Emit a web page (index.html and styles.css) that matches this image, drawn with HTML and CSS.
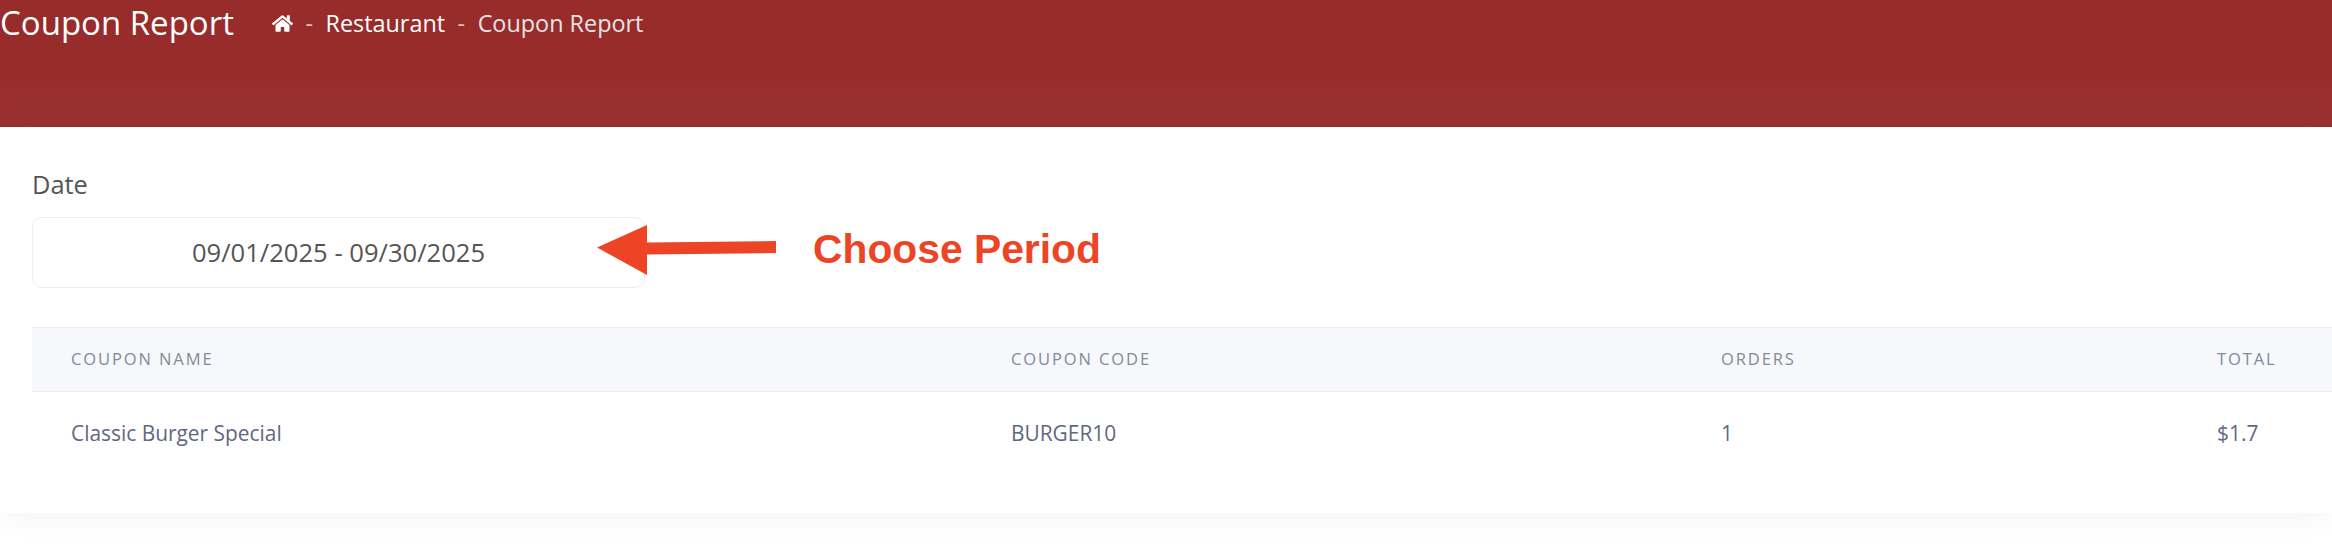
FILE: index.html
```html
<!DOCTYPE html>
<html lang="en">
<head>
<meta charset="utf-8">
<title>Coupon Report</title>
<link rel="stylesheet" href="styles.css">
</head>
<body>
<header class="banner">
  <h1 class="title">Coupon Report</h1>
  <nav class="crumbs">
    <svg class="home" viewBox="0 0 576 512" aria-hidden="true"><path d="M280.37 148.26L96 300.11V464a16 16 0 0 0 16 16l112.06-.29a16 16 0 0 0 15.92-16V368a16 16 0 0 1 16-16h64a16 16 0 0 1 16 16v95.64a16 16 0 0 0 16 16.05L464 480a16 16 0 0 0 16-16V300L295.67 148.26a12.19 12.19 0 0 0-15.3 0zM571.6 251.47L488 182.56V44.05a12 12 0 0 0-12-12h-56a12 12 0 0 0-12 12v72.61L318.47 43a48 48 0 0 0-61 0L4.34 251.47a12 12 0 0 0-1.6 16.9l25.5 31A12 12 0 0 0 45.15 301l235.22-193.74a12.19 12.19 0 0 1 15.3 0L530.9 301a12 12 0 0 0 16.9-1.6l25.5-31a12 12 0 0 0-1.7-16.93z"/></svg>
    <span class="sep">-</span>
    <span class="crumb">Restaurant</span>
    <span class="sep">-</span>
    <span class="crumb current">Coupon Report</span>
  </nav>
</header>
<main class="card">
  <label class="field-label">Date</label>
  <div class="date-box">09/01/2025 - 09/30/2025</div>
  <table class="report">
    <colgroup>
      <col class="col-name"><col class="col-code"><col class="col-orders"><col class="col-total">
    </colgroup>
    <thead>
      <tr><th>Coupon Name</th><th>Coupon Code</th><th>Orders</th><th>Total</th></tr>
    </thead>
    <tbody>
      <tr><td>Classic Burger Special</td><td>BURGER10</td><td>1</td><td>$1.7</td></tr>
    </tbody>
  </table>
  <svg class="arrow" viewBox="0 0 180 50" aria-hidden="true"><path d="M0 22.500L50 0V17.500L179 16V28L50 29.500V50Z"/></svg>
  <div class="callout">Choose Period</div>
</main>
</body>
</html>
```
FILE: styles.css
```css
* { box-sizing: border-box; }
html, body { margin: 0; height: 100%; }
body {
  background: #fff;
  font-family: "Open Sans", sans-serif;
  overflow: hidden;
}
.banner {
  height: 127px;
  background: linear-gradient(#972c2b 60%, #9a3231);
  padding: 0;
  display: flex;
  align-items: flex-start;
  color: #fff;
}
.title {
  margin: 0;
  font-size: 33px;
  line-height: 46px;
  font-weight: 500;
}
.crumbs {
  margin-left: 38px;
  display: flex;
  align-items: center;
  gap: 12.500px;
  height: 46px;
  font-size: 23.400px;
  font-weight: 500;
}
.home { width: 21px; height: 19px; fill: #fff; }
.sep { color: #d8c3c8; font-weight: 400; }
.crumb.current { color: #e8e3e6; }
.card {
  position: relative;
  height: 386px;
  background: #fff;
  padding: 40px 0 0 32px;
  box-shadow: 0 0 30px rgba(82, 63, 105, .07);
}
.field-label {
  display: block;
  font-size: 25.400px;
  line-height: 34px;
  color: #555;
  font-weight: 400;
}
.date-box {
  width: 613px;
  height: 71px;
  margin-top: 16px;
  border: 1px solid #ebedf0;
  border-radius: 10px;
  text-align: center;
  font-size: 25.600px;
  line-height: 69px;
  color: #555;
  font-weight: 400;
}
.report {
  margin-top: 39px;
  width: 2300px;
  table-layout: fixed;
  border-collapse: collapse;
}
.col-name { width: 940px; }
.col-code { width: 710px; }
.col-orders { width: 496px; }
.col-total { width: 154px; }
.report th {
  height: 64px;
  padding: 0 0 2px 39px;
  background: #f7f8fc;
  border-top: 1px solid #ebedf2;
  border-bottom: 1px solid #ebedf2;
  text-align: left;
  font-size: 16.500px;
  font-weight: 500;
  letter-spacing: 1.9px;
  text-transform: uppercase;
  color: #7f8b9b;
}
.report td {
  height: 81px;
  padding: 1px 0 0 39px;
  font-size: 20.900px;
  font-weight: 400;
  color: #5f6883;
}
.arrow {
  position: absolute;
  left: 597px;
  top: 98px;
  width: 180px;
  height: 50px;
  fill: #ee4426;
}
.callout {
  position: absolute;
  left: 813px;
  top: 95px;
  font-family: "Liberation Sans", Arial, sans-serif;
  font-size: 40.800px;
  line-height: 54px;
  font-weight: 700;
  color: #ee4426;
}
```
